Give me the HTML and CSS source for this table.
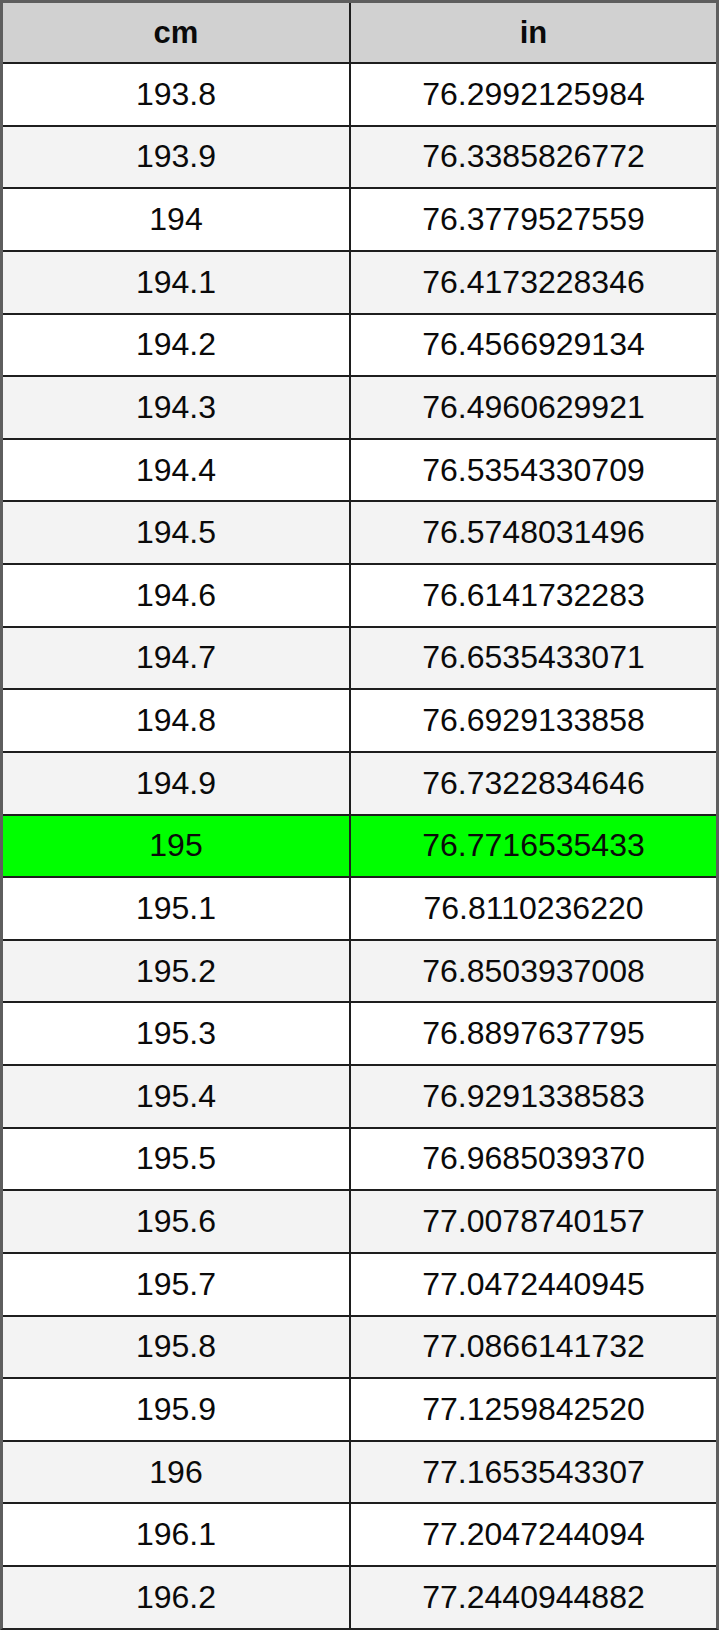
FILE: index.html
```html
<!DOCTYPE html>
<html>
<head>
<meta charset="utf-8">
<link rel="stylesheet" href="styles.css">
</head>
<body>
<div class="table">
  <div class="row head"><div class="cell">cm</div><div class="cell">in</div></div>
  <div class="row"><div class="cell">193.8</div><div class="cell">76.2992125984</div></div>
  <div class="row alt"><div class="cell">193.9</div><div class="cell">76.3385826772</div></div>
  <div class="row"><div class="cell">194</div><div class="cell">76.3779527559</div></div>
  <div class="row alt"><div class="cell">194.1</div><div class="cell">76.4173228346</div></div>
  <div class="row"><div class="cell">194.2</div><div class="cell">76.4566929134</div></div>
  <div class="row alt"><div class="cell">194.3</div><div class="cell">76.4960629921</div></div>
  <div class="row"><div class="cell">194.4</div><div class="cell">76.5354330709</div></div>
  <div class="row alt"><div class="cell">194.5</div><div class="cell">76.5748031496</div></div>
  <div class="row"><div class="cell">194.6</div><div class="cell">76.6141732283</div></div>
  <div class="row alt"><div class="cell">194.7</div><div class="cell">76.6535433071</div></div>
  <div class="row"><div class="cell">194.8</div><div class="cell">76.6929133858</div></div>
  <div class="row alt"><div class="cell">194.9</div><div class="cell">76.7322834646</div></div>
  <div class="row hl"><div class="cell">195</div><div class="cell">76.7716535433</div></div>
  <div class="row"><div class="cell">195.1</div><div class="cell">76.8110236220</div></div>
  <div class="row alt"><div class="cell">195.2</div><div class="cell">76.8503937008</div></div>
  <div class="row"><div class="cell">195.3</div><div class="cell">76.8897637795</div></div>
  <div class="row alt"><div class="cell">195.4</div><div class="cell">76.9291338583</div></div>
  <div class="row"><div class="cell">195.5</div><div class="cell">76.9685039370</div></div>
  <div class="row alt"><div class="cell">195.6</div><div class="cell">77.0078740157</div></div>
  <div class="row"><div class="cell">195.7</div><div class="cell">77.0472440945</div></div>
  <div class="row alt"><div class="cell">195.8</div><div class="cell">77.0866141732</div></div>
  <div class="row"><div class="cell">195.9</div><div class="cell">77.1259842520</div></div>
  <div class="row alt"><div class="cell">196</div><div class="cell">77.1653543307</div></div>
  <div class="row"><div class="cell">196.1</div><div class="cell">77.2047244094</div></div>
  <div class="row alt"><div class="cell">196.2</div><div class="cell">77.2440944882</div></div>
</div>
</body>
</html>
```
FILE: styles.css
```css
html, body {
  margin: 0;
  padding: 0;
  background: #ffffff;
}
.table {
  width: 713px;
  border: 3px solid #5e5e5e;
  border-bottom-width: 2px;
  border-bottom-color: #222;
  font-family: "Liberation Sans", Arial, sans-serif;
  font-size: 32px;
  color: #0a0a0a;
}
.row {
  display: grid;
  grid-template-columns: 346px 1fr;
  height: 60.64px;
  border-top: 2px solid #1e1e1e;
  background: #ffffff;
}
.row.head {
  height: 59px;
  border-top: none;
  background: #d1d1d1;
  font-weight: bold;
  font-size: 31px;
}
.row.alt { background: #f3f3f3; }
.row.hl { background: #00ff00; }
.cell {
  display: flex;
  align-items: center;
  justify-content: center;
}
.cell + .cell {
  border-left: 2px solid #1e1e1e;
}
```
